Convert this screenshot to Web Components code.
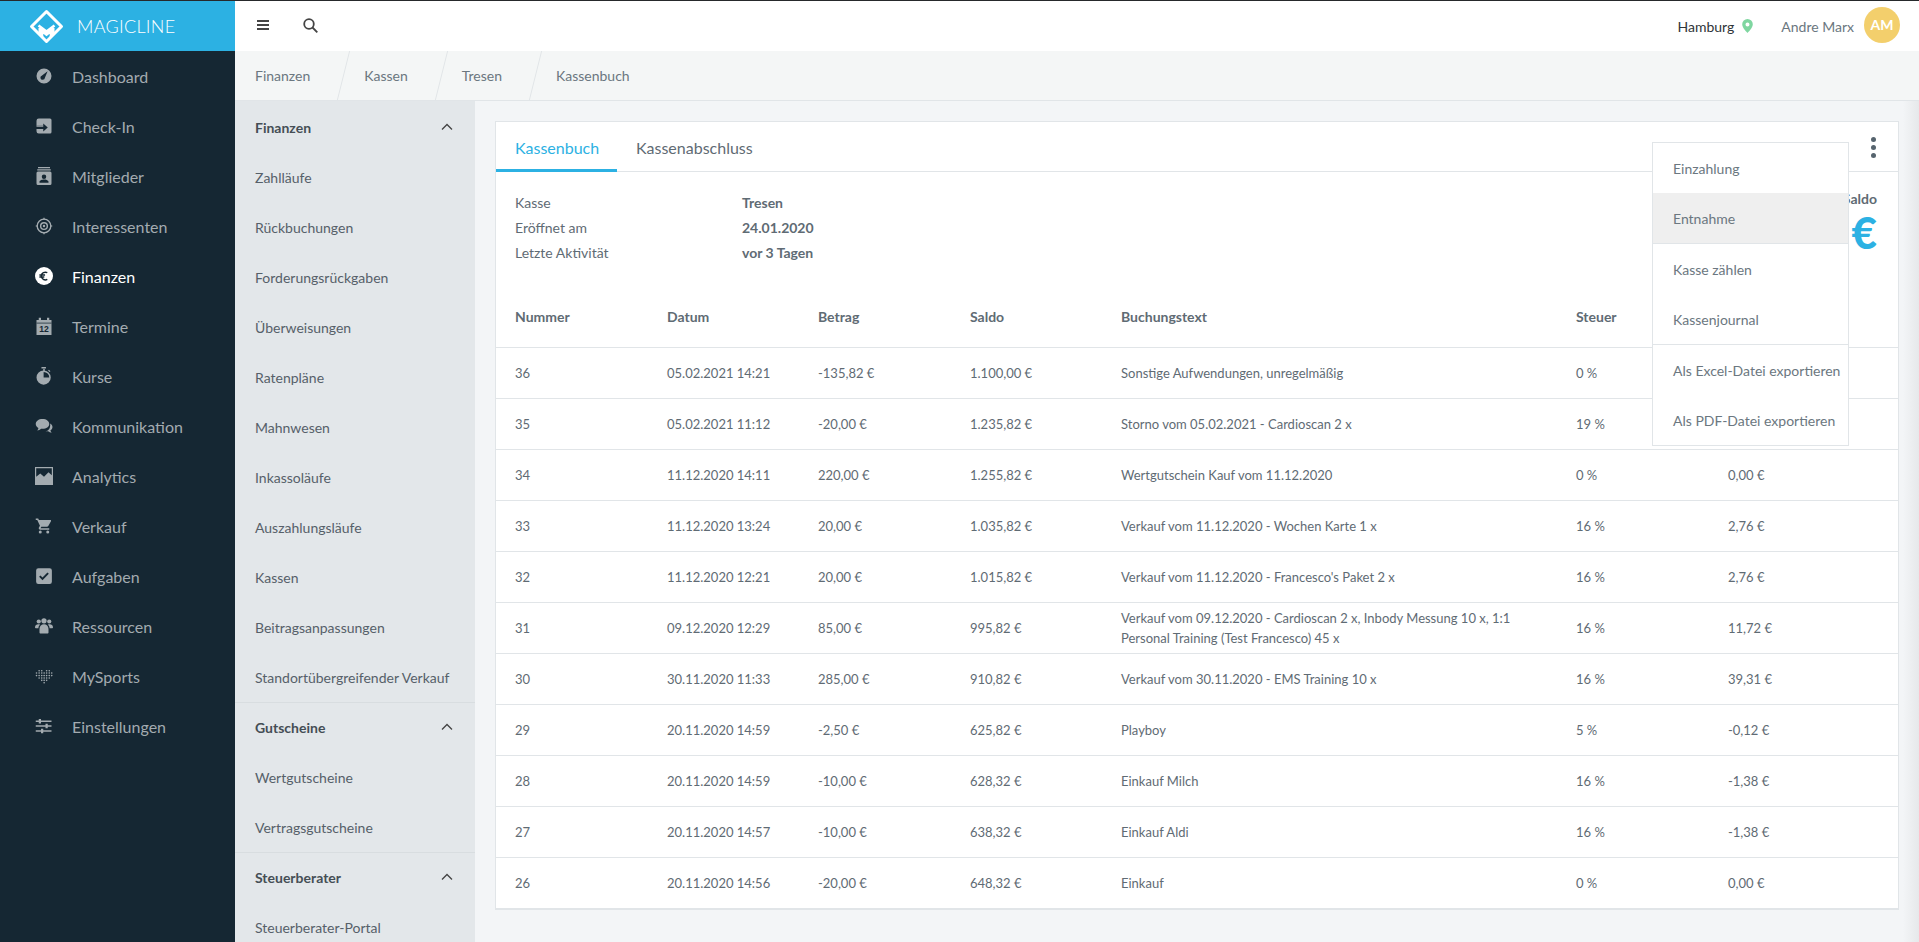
<!DOCTYPE html>
<html lang="de">
<head>
<meta charset="utf-8">
<title>Kassenbuch</title>
<style>
  html, body { margin: 0; height: 100%; overflow: hidden; }
  body { font-family: Lato, "Liberation Sans", sans-serif; font-size: 14px; color: #5f6b74; }
</style>
</head>
<body>
<mc-shell>
  <mc-brand slot="brand"></mc-brand>
  <mc-topbar slot="top" location="Hamburg" user="Andre Marx" initials="AM"></mc-topbar>
  <mc-sidenav slot="nav">
    <mc-nav-item icon="dashboard">Dashboard</mc-nav-item>
    <mc-nav-item icon="checkin">Check-In</mc-nav-item>
    <mc-nav-item icon="members">Mitglieder</mc-nav-item>
    <mc-nav-item icon="leads">Interessenten</mc-nav-item>
    <mc-nav-item icon="finance" active>Finanzen</mc-nav-item>
    <mc-nav-item icon="calendar">Termine</mc-nav-item>
    <mc-nav-item icon="timer">Kurse</mc-nav-item>
    <mc-nav-item icon="chat">Kommunikation</mc-nav-item>
    <mc-nav-item icon="chart">Analytics</mc-nav-item>
    <mc-nav-item icon="cart">Verkauf</mc-nav-item>
    <mc-nav-item icon="task">Aufgaben</mc-nav-item>
    <mc-nav-item icon="people">Ressourcen</mc-nav-item>
    <mc-nav-item icon="heart">MySports</mc-nav-item>
    <mc-nav-item icon="tune">Einstellungen</mc-nav-item>
  </mc-sidenav>
  <mc-crumbs slot="crumbs">
    <mc-crumb>Finanzen</mc-crumb>
    <mc-crumb>Kassen</mc-crumb>
    <mc-crumb>Tresen</mc-crumb>
    <mc-crumb last>Kassenbuch</mc-crumb>
  </mc-crumbs>
  <mc-subnav slot="sub">
    <mc-subgroup heading="Finanzen">
      <mc-subitem>Zahlläufe</mc-subitem>
      <mc-subitem>Rückbuchungen</mc-subitem>
      <mc-subitem>Forderungsrückgaben</mc-subitem>
      <mc-subitem>Überweisungen</mc-subitem>
      <mc-subitem>Ratenpläne</mc-subitem>
      <mc-subitem>Mahnwesen</mc-subitem>
      <mc-subitem>Inkassoläufe</mc-subitem>
      <mc-subitem>Auszahlungsläufe</mc-subitem>
      <mc-subitem>Kassen</mc-subitem>
      <mc-subitem>Beitragsanpassungen</mc-subitem>
      <mc-subitem>Standortübergreifender Verkauf</mc-subitem>
    </mc-subgroup>
    <mc-subgroup heading="Gutscheine">
      <mc-subitem>Wertgutscheine</mc-subitem>
      <mc-subitem>Vertragsgutscheine</mc-subitem>
    </mc-subgroup>
    <mc-subgroup heading="Steuerberater">
      <mc-subitem>Steuerberater-Portal</mc-subitem>
    </mc-subgroup>
  </mc-subnav>
  <mc-cashbook slot="main">
    <mc-cash-table></mc-cash-table>
    <mc-action-menu slot="menu"></mc-action-menu>
  </mc-cashbook>
</mc-shell>

<script>
const FONT = 'Lato, "Liberation Sans", sans-serif';

const ICONS = {
  dashboard: `<path fill-rule="evenodd" d="M12 2a10 10 0 1 0 0 20 10 10 0 0 0 0-20zm-2.6 9.2 7.4-5.4-3.6 8.4a3 3 0 1 1-3.8-3z"/>`,
  checkin: `<path d="M5 2h15a2 2 0 0 1 2 2v16a2 2 0 0 1-2 2H5a3 3 0 0 1-3-3v-3h2.4l0 0H11v3.4l6-5.4-6-5.4V11H2V5a3 3 0 0 1 3-3z"/><path d="M2 11h9v2H2z"/>`,
  members: `<path d="M4 0h16v1.5H4zM3 3h18v1.5H3z"/><path fill-rule="evenodd" d="M4 6h16a2 2 0 0 1 2 2v14a2 2 0 0 1-2 2H4a2 2 0 0 1-2-2V8a2 2 0 0 1 2-2zm8 4a3 3 0 1 0 0 6 3 3 0 0 0 0-6zm-6 11h12v-1.4c0-2-4-3-6-3s-6 1-6 3z"/>`,
  leads: `<path fill-rule="evenodd" d="M12 2a10 10 0 1 0 0 20 10 10 0 0 0 0-20zm0 1.8a8.2 8.2 0 1 1 0 16.4 8.2 8.2 0 0 1 0-16.4z"/><path fill-rule="evenodd" d="M12 6.6a5.4 5.4 0 1 0 0 10.8 5.4 5.4 0 0 0 0-10.8zm0 1.9a3.5 3.5 0 1 1 0 7 3.5 3.5 0 0 1 0-7z"/><circle cx="12" cy="12" r="1.6"/><path d="M11.2 1h1.6v3h-1.6zM11.2 20h1.6v3h-1.6zM1 11.2h3v1.6H1zM20 11.2h3v1.6h-3z"/>`,
  finance: `<circle cx="12" cy="12" r="12"/><path d="M16.4 7.6a5.4 5.4 0 0 0-8 4.4 5.4 5.4 0 0 0 8 4.6M5.8 10.6h7.6M5.8 13.4h6.6" fill="none" stroke="#152733" stroke-width="2"/>`,
  calendar: `<path d="M5 1h3v3h8V1h3v3h3v20H2V4h3z"/><rect x="3.4" y="9" width="17.2" height="13.6" fill="#a3abb0"/><text x="12" y="20.4" text-anchor="middle" font-family="Liberation Sans, sans-serif" font-size="11.5" font-weight="700" fill="#152733">12</text><path d="M2 7.6h20v1H2z" fill="#152733"/>`,
  timer: `<path d="M8.6 0h6v2h-6z"/><path d="M11 2.4h2v3h-2z"/><path fill-rule="evenodd" d="M11.5 4.5a9.5 9.5 0 1 0 0 19 9.5 9.5 0 0 0 0-19zm0 2a7.5 7.5 0 0 1 7.5 7.5h-7.5z"/><path d="m18.6 3.6 2 2-1.2 1.2-2-2z"/>`,
  chat: `<path d="M10 2.6c5.2 0 9 2.8 9 6.6 0 3.7-3.8 6.6-9 6.6l-2-.1c-1.4 1.3-3.2 2-5 2.2.9-.9 1.5-2 1.6-3.3C2.400 13.400 1 11.400 1 9.200 1 5.400 4.800 2.600 10 2.600z"/><path d="M20.300 8.500c1.900 1.100 3 2.800 3 4.700 0 1.900-1.100 3.500-2.700 4.600.1 1.300.7 2.300 1.600 3.200-1.800-.2-3.400-.9-4.700-2-1.200.2-2.400.1-3.500-.1 3.700-.5 6.700-3.300 6.300-10.400z"/>`,
  chart: `<path fill-rule="evenodd" d="M0 0h24v24H0zm1.600 1.600v11.500L7 8.500l5 4.600 6-6 4.400 4V1.600z"/>`,
  cart: `<path d="M7 18a2 2 0 1 0 0 4 2 2 0 0 0 0-4zM1 2v2h2l3.600 7.600-1.400 2.400C4.500 15.400 5.500 17 7 17h12v-2H7.400l1.100-2h7.500c.7 0 1.400-.4 1.700-1L21.300 5.500c.4-.7-.1-1.500-.9-1.500H5.200l-.9-2zm16 16a2 2 0 1 0 0 4 2 2 0 0 0 0-4z"/>`,
  task: `<path fill-rule="evenodd" d="M4.500 1.500h15a3 3 0 0 1 3 3v15a3 3 0 0 1-3 3h-15a3 3 0 0 1-3-3v-15a3 3 0 0 1 3-3zM10 17.500l8.400-8.400-1.800-1.800-6.600 6.600-2.700-2.700-1.800 1.800z"/>`,
  people: `<circle cx="5" cy="6" r="2.800"/><circle cx="19" cy="6" r="2.800"/><circle cx="12" cy="5" r="3.500"/><path d="M0 14c0-3 2-4.400 4.500-4.400 1 0 1.700.2 2.300.6C5.200 11.400 4.600 13 4.600 15H1c-.6 0-1-.4-1-1zM24 14c0-3-2-4.400-4.500-4.400-1 0-1.700.2-2.300.6 1.600 1.200 2.200 2.800 2.200 4.800h3.600c.6 0 1-.4 1-1zM6 16c0-4 2.600-6.500 6-6.500s6 2.500 6 6.500v4.500c0 .8-.6 1.500-1.500 1.500h-9C6.600 22 6 21.300 6 20.500z"/>`,
  heart: `<g id="d"><circle cx="2" cy="8" r="1.100"/><circle cx="2" cy="11.400" r="1.100"/><circle cx="5.500" cy="5" r="1.100"/><circle cx="5.500" cy="8" r="1.100"/><circle cx="5.500" cy="11.400" r="1.100"/><circle cx="5.500" cy="14.600" r="1.100"/><circle cx="9" cy="5" r="1.100"/><circle cx="9" cy="8" r="1.100"/><circle cx="9" cy="11.400" r="1.100"/><circle cx="9" cy="14.600" r="1.100"/><circle cx="9" cy="17.800" r="1.100"/></g><circle cx="12.200" cy="8" r="1.100"/><circle cx="12.200" cy="11.400" r="1.100"/><circle cx="12.200" cy="14.600" r="1.100"/><circle cx="12.200" cy="17.800" r="1.100"/><circle cx="12.200" cy="21" r="1.100"/><circle cx="15.500" cy="5" r="1.100"/><circle cx="15.500" cy="8" r="1.100"/><circle cx="15.500" cy="11.400" r="1.100"/><circle cx="15.500" cy="14.600" r="1.100"/><circle cx="15.500" cy="17.800" r="1.100"/><circle cx="19" cy="5" r="1.100"/><circle cx="19" cy="8" r="1.100"/><circle cx="19" cy="11.400" r="1.100"/><circle cx="19" cy="14.600" r="1.100"/><circle cx="22.300" cy="8" r="1.100"/><circle cx="22.300" cy="11.400" r="1.100"/>`,
  tune: `<path d="M1 4.500h21v2H1zM1 11h21v2H1zM1 17.500h21v2H1z"/><path d="M5 2.500h3v6H5zM14 9h3v6h-3zM8 15.500h3v6H8z"/>`
};

class McShell extends HTMLElement {
  constructor() {
    super();
    this.attachShadow({ mode: "open" });
    this.shadowRoot.innerHTML = `
      <style>
        :host { display: grid; height: 100vh; box-sizing: border-box; overflow: hidden;
                border-top: 1px solid #26292b; font-family: ${FONT};
                grid-template-columns: 235px 240px 1fr;
                grid-template-rows: 50px 50px 1fr; }
        ::slotted([slot=brand]) { grid-column: 1; grid-row: 1; }
        ::slotted([slot=top]) { grid-column: 2 / 4; grid-row: 1; }
        ::slotted([slot=nav]) { grid-column: 1; grid-row: 2 / 4; }
        ::slotted([slot=crumbs]) { grid-column: 2 / 4; grid-row: 2; }
        ::slotted([slot=sub]) { grid-column: 2; grid-row: 3; }
        ::slotted([slot=main]) { grid-column: 3; grid-row: 3; min-width: 0; min-height: 0; }
      </style>
      <slot name="brand"></slot><slot name="top"></slot><slot name="nav"></slot>
      <slot name="crumbs"></slot><slot name="sub"></slot><slot name="main"></slot>
    `;
  }
}

class McBrand extends HTMLElement {
  constructor() {
    super();
    this.attachShadow({ mode: "open" });
    this.shadowRoot.innerHTML = `
      <style>
        :host { display: flex; align-items: center; gap: 13px; padding-left: 29px; background: #2cb1e3; color: #fff; }
        svg { width: 35px; height: 35px; flex: none; }
        span { font-size: 18px; font-weight: 300; letter-spacing: .3px; }
      </style>
      <svg viewBox="0 0 35 35" fill="none" stroke="#fff">
        <path d="M17.500 2.500 32.500 17.500 17.500 32.500 2.500 17.500z" stroke-width="3" stroke-linejoin="round"/>
        <path d="M9.500 16.500 17.500 22.500 25.500 16.500M10.800 19v6.500M24.200 19v6.500M13 28v-6l4.500 3.500 4.500-3.500v6" stroke-width="2.600"/>
      </svg>
      <span>MAGICLINE</span>
    `;
  }
}

class McTopbar extends HTMLElement {
  constructor() {
    super();
    this.attachShadow({ mode: "open" });
  }
  connectedCallback() {
    this.shadowRoot.innerHTML = `
      <style>
        :host { display: flex; align-items: center; background: #fff; padding-left: 22px; font-size: 14px; }
        .burger { width: 12px; height: 10px; border-top: 2px solid #444; border-bottom: 2px solid #444; box-sizing: border-box; position: relative; margin-top: -2px; }
        .burger::after { content: ""; position: absolute; left: 0; right: 0; top: 2px; height: 2px; background: #444; }
        .search { width: 15px; height: 15px; margin-left: 34px; margin-top: -1px; }
        .right { margin-left: auto; display: flex; align-items: center; padding-right: 19px; }
        .loc { color: #2f3438; }
        .pin { width: 11px; height: 14px; margin: 0 28px 0 8px; }
        .user { color: #6b7780; margin-right: 10px; }
        .avatar { width: 36px; height: 36px; border-radius: 50%; background: #f3cf6c; color: #fff; font-weight: 700;
                  display: flex; align-items: center; justify-content: center; margin-top: -3px; }
      </style>
      <div class="burger"></div>
      <svg class="search" viewBox="0 0 15 15" fill="none" stroke="#444" stroke-width="1.800"><circle cx="6" cy="6" r="4.800"/><path d="m9.500 9.500 4.800 4.800"/></svg>
      <div class="right">
        <span class="loc">${this.getAttribute("location")}</span>
        <svg class="pin" viewBox="0 0 11 14"><path fill="#7fd6a0" fill-rule="evenodd" d="M5.500 0A5.300 5.300 0 0 0 .2 5.300C.2 9 5.500 14 5.500 14s5.300-5 5.300-8.700A5.300 5.300 0 0 0 5.500 0zm0 3.400a2 2 0 1 1 0 4 2 2 0 0 1 0-4z"/></svg>
        <span class="user">${this.getAttribute("user")}</span>
        <div class="avatar">${this.getAttribute("initials")}</div>
      </div>
    `;
  }
}

class McSidenav extends HTMLElement {
  constructor() {
    super();
    this.attachShadow({ mode: "open" });
    this.shadowRoot.innerHTML = `
      <style>:host { display: flex; flex-direction: column; background: #152733; }</style>
      <slot></slot>
    `;
  }
}

class McNavItem extends HTMLElement {
  constructor() {
    super();
    this.attachShadow({ mode: "open" });
  }
  connectedCallback() {
    this.shadowRoot.innerHTML = `
      <style>
        :host { display: flex; align-items: center; height: 50px; flex: none; padding-left: 35px; gap: 19px;
                color: #a3abb0; font-size: 16px; }
        :host([active]) { color: #fff; }
        svg { width: 18px; height: 18px; fill: currentColor; flex: none; }
      </style>
      <svg viewBox="0 0 24 24">${ICONS[this.getAttribute("icon")] || ""}</svg>
      <slot></slot>
    `;
  }
}

class McCrumbs extends HTMLElement {
  constructor() {
    super();
    this.attachShadow({ mode: "open" });
    this.shadowRoot.innerHTML = `
      <style>:host { display: flex; background: #f4f6f6; border-bottom: 1px solid #e1e5e8; box-sizing: border-box; height: 50px; }</style>
      <slot></slot>
    `;
  }
}

class McCrumb extends HTMLElement {
  constructor() {
    super();
    this.attachShadow({ mode: "open" });
    this.shadowRoot.innerHTML = `
      <style>
        :host { display: flex; align-items: center; position: relative; padding: 0 34px 0 20px; color: #6b7780; font-size: 14px; }
        :host(:not([last]))::after { content: ""; position: absolute; right: 0; top: 0; bottom: 0; width: 1px;
                                     background: #e1e5e8; transform: skewX(-14deg); }
      </style>
      <slot></slot>
    `;
  }
}

class McSubnav extends HTMLElement {
  constructor() {
    super();
    this.attachShadow({ mode: "open" });
    this.shadowRoot.innerHTML = `
      <style>:host { display: block; background: #e3e7ea; overflow: hidden; padding-top: 1px; }</style>
      <slot></slot>
    `;
  }
}

class McSubgroup extends HTMLElement {
  constructor() {
    super();
    this.attachShadow({ mode: "open" });
  }
  connectedCallback() {
    this.shadowRoot.innerHTML = `
      <style>
        :host { display: block; border-bottom: 1px solid #d8dde0; margin-bottom: -1px; color: #4e5860; }
        header { display: flex; align-items: center; justify-content: space-between; height: 50px;
                 padding: 0 22px 0 20px; font-weight: 700; font-size: 14px; color: #454e55; }
        svg { width: 12px; height: 8px; }
      </style>
      <header>
        <span>${this.getAttribute("heading")}</span>
        <svg viewBox="0 0 12 8" fill="none" stroke="#444" stroke-width="1.300"><path d="M1 6.500 6 1.500l5 5"/></svg>
      </header>
      <slot></slot>
    `;
  }
}

class McSubitem extends HTMLElement {
  constructor() {
    super();
    this.attachShadow({ mode: "open" });
    this.shadowRoot.innerHTML = `
      <style>:host { display: flex; align-items: center; height: 50px; padding-left: 20px; font-size: 14px; color: #566069; }</style>
      <slot></slot>
    `;
  }
}

class McCashbook extends HTMLElement {
  constructor() {
    super();
    this.attachShadow({ mode: "open" });
    this.shadowRoot.innerHTML = `
      <style>
        :host { display: block; overflow: hidden; padding: 20px 20px 0; 
                background: linear-gradient(90deg, #f3f5f7 calc(100% - 16px), #e6e8ea 100%); }
        .card { position: relative; background: #fff; border: 1px solid #e1e5e8; color: #5f6b74; font-size: 14px; }
        nav { display: flex; height: 50px; box-sizing: border-box; border-bottom: 1px solid #e1e5e8; font-size: 16px; }
        nav a { display: flex; align-items: center; padding: 0 19px; height: 50px; box-sizing: border-box; }
        nav a.on { color: #2cb1e3; border-bottom: 3px solid #2cb1e3; padding: 3px 19px 0; width: 121px; }
        .kebab { margin-left: auto; display: flex; flex-direction: column; gap: 3px; padding: 15px 22px 0 0; }
        .kebab i { width: 5px; height: 5px; border-radius: 50%; background: #56646e; }
        .info { display: flex; justify-content: space-between; padding: 18px 21px 22px 19px; }
        dl { display: grid; grid-template-columns: 227px auto; grid-auto-rows: 25px; align-items: center; margin: 0; }
        dd { margin: 0; font-weight: 700; }
        .balance { text-align: right; font-weight: 700; }
        .balance b { display: block; font-size: 44px; line-height: 44px; margin-top: 3px; color: #2cb1e3; }
        ::slotted([slot=menu]) { position: absolute; top: 20px; right: 49px; }
      </style>
      <div class="card">
        <nav>
          <a class="on">Kassenbuch</a><a>Kassenabschluss</a>
          <div class="kebab"><i></i><i></i><i></i></div>
        </nav>
        <div class="info">
          <dl>
            <dt>Kasse</dt><dd>Tresen</dd>
            <dt>Eröffnet am</dt><dd>24.01.2020</dd>
            <dt>Letzte Aktivität</dt><dd>vor 3 Tagen</dd>
          </dl>
          <div class="balance">Saldo<b>€</b></div>
        </div>
        <slot></slot>
        <slot name="menu"></slot>
      </div>
    `;
  }
}

const ROWS = [
  ["36", "05.02.2021 14:21", "-135,82 €", "1.100,00 €", "Sonstige Aufwendungen, unregelmäßig", "0 %", ""],
  ["35", "05.02.2021 11:12", "-20,00 €", "1.235,82 €", "Storno vom 05.02.2021 - Cardioscan 2 x", "19 %", ""],
  ["34", "11.12.2020 14:11", "220,00 €", "1.255,82 €", "Wertgutschein Kauf vom 11.12.2020", "0 %", "0,00 €"],
  ["33", "11.12.2020 13:24", "20,00 €", "1.035,82 €", "Verkauf vom 11.12.2020 - Wochen Karte 1 x", "16 %", "2,76 €"],
  ["32", "11.12.2020 12:21", "20,00 €", "1.015,82 €", "Verkauf vom 11.12.2020 - Francesco's Paket 2 x", "16 %", "2,76 €"],
  ["31", "09.12.2020 12:29", "85,00 €", "995,82 €", "Verkauf vom 09.12.2020 - Cardioscan 2 x, Inbody Messung 10 x, 1:1 Personal Training (Test Francesco) 45 x", "16 %", "11,72 €"],
  ["30", "30.11.2020 11:33", "285,00 €", "910,82 €", "Verkauf vom 30.11.2020 - EMS Training 10 x", "16 %", "39,31 €"],
  ["29", "20.11.2020 14:59", "-2,50 €", "625,82 €", "Playboy", "5 %", "-0,12 €"],
  ["28", "20.11.2020 14:59", "-10,00 €", "628,32 €", "Einkauf Milch", "16 %", "-1,38 €"],
  ["27", "20.11.2020 14:57", "-10,00 €", "638,32 €", "Einkauf Aldi", "16 %", "-1,38 €"],
  ["26", "20.11.2020 14:56", "-20,00 €", "648,32 €", "Einkauf", "0 %", "0,00 €"]
];

class McCashTable extends HTMLElement {
  constructor() {
    super();
    this.attachShadow({ mode: "open" });
    const body = ROWS.map(r => `<tr>${r.map(c => `<td>${c}</td>`).join("")}</tr>`).join("");
    this.shadowRoot.innerHTML = `
      <style>
        :host { display: block; }
        table { width: 100%; border-collapse: collapse; table-layout: fixed; font-size: 13px; line-height: 20px; }
        th { height: 60px; text-align: left; font-size: 14px; font-weight: 700; padding: 0; }
        td { height: 50px; padding: 0; border-top: 1px solid #e1e5e8; }
        tr { height: 51px; }
        td:nth-child(5) { padding-right: 14px; }
        tr:last-child td { border-bottom: 1px solid #e1e5e8; }
        th:first-child, td:first-child { padding-left: 19px; }
        .empty td { height: 40px; border-bottom: 0; }
      </style>
      <table>
        <colgroup>
          <col style="width:171px"><col style="width:151px"><col style="width:152px"><col style="width:151px">
          <col style="width:455px"><col style="width:152px"><col>
        </colgroup>
        <thead><tr><th>Nummer</th><th>Datum</th><th>Betrag</th><th>Saldo</th><th>Buchungstext</th><th>Steuer</th><th></th></tr></thead>
        <tbody>${body}</tbody>
      </table>
    `;
  }
}

class McActionMenu extends HTMLElement {
  constructor() {
    super();
    this.attachShadow({ mode: "open" });
    this.shadowRoot.innerHTML = `
      <style>
        :host { display: block; width: 197px; box-sizing: border-box; background: #fff; border: 1px solid #e1e5e8;
                font-size: 14px; color: #6b7780; }
        div { display: flex; align-items: center; height: 50px; padding-left: 20px; }
        .hover { background: #efefef; }
        hr { margin: 0; border: 0; border-top: 1px solid #e1e5e8; }
      </style>
      <div>Einzahlung</div>
      <div class="hover">Entnahme</div>
      <hr>
      <div>Kasse zählen</div>
      <div>Kassenjournal</div>
      <hr>
      <div>Als Excel-Datei exportieren</div>
      <div>Als PDF-Datei exportieren</div>
    `;
  }
}

customElements.define("mc-shell", McShell);
customElements.define("mc-brand", McBrand);
customElements.define("mc-topbar", McTopbar);
customElements.define("mc-sidenav", McSidenav);
customElements.define("mc-nav-item", McNavItem);
customElements.define("mc-crumbs", McCrumbs);
customElements.define("mc-crumb", McCrumb);
customElements.define("mc-subnav", McSubnav);
customElements.define("mc-subgroup", McSubgroup);
customElements.define("mc-subitem", McSubitem);
customElements.define("mc-cashbook", McCashbook);
customElements.define("mc-cash-table", McCashTable);
customElements.define("mc-action-menu", McActionMenu);
</script>
</body>
</html>
